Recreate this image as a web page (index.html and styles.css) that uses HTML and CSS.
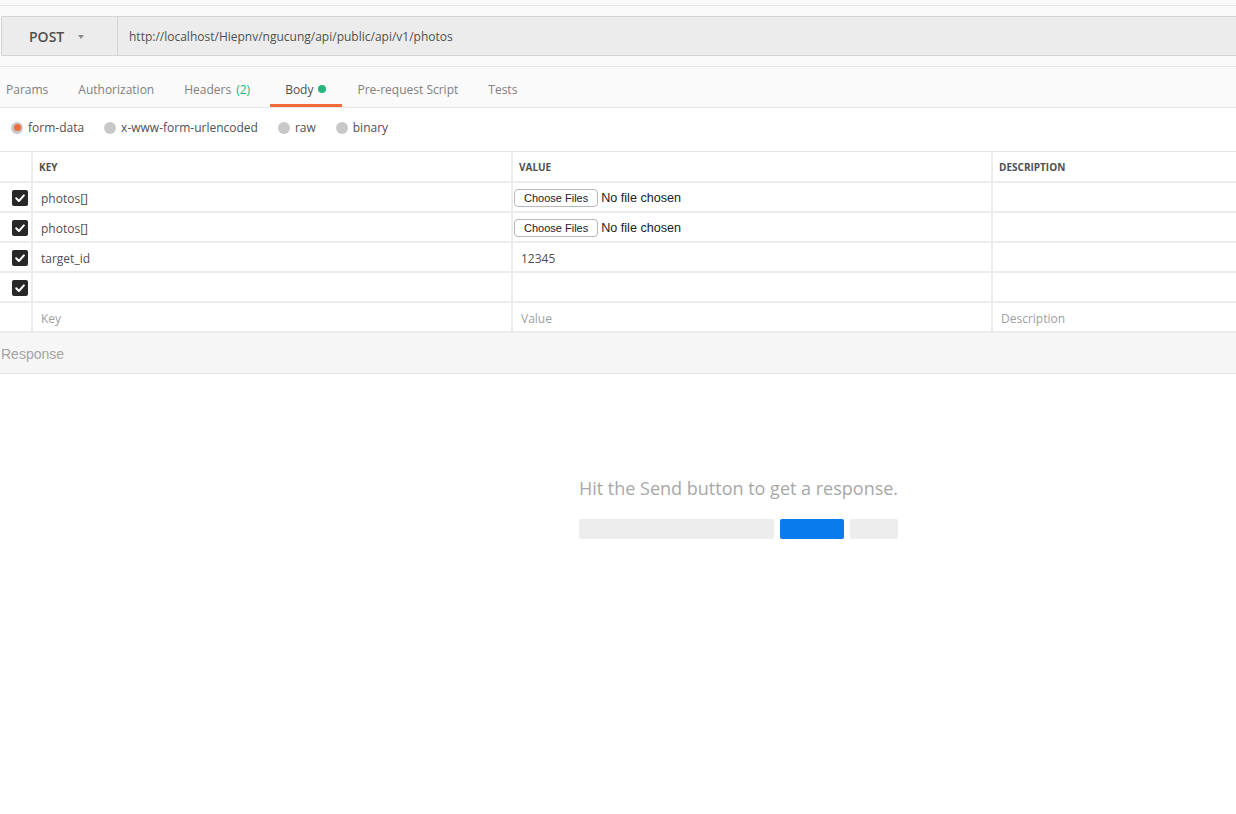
FILE: index.html
```html
<!DOCTYPE html>
<html>
<head>
<meta charset="utf-8">
<link rel="stylesheet" href="styles.css">
</head>
<body>
<div class="app">
  <div class="topstrip"></div>
  <div class="urlrow">
    <div class="urlbar">
      <div class="method">POST <span class="caret"></span></div>
      <div class="url">http://localhost/Hiepnv/ngucung/api/public/api/v1/photos</div>
    </div>
  </div>
  <div class="tabs">
    <div class="tab first">Params</div>
    <div class="tab">Authorization</div>
    <div class="tab headers">Headers <span class="count">(2)</span></div>
    <div class="tab active">Body <span class="dot"></span></div>
    <div class="tab">Pre-request Script</div>
    <div class="tab">Tests</div>
  </div>
  <div class="body">
    <div class="radios">
      <div class="radio"><span class="circle sel"></span>form-data</div>
      <div class="radio"><span class="circle"></span>x-www-form-urlencoded</div>
      <div class="radio"><span class="circle"></span>raw</div>
      <div class="radio"><span class="circle"></span>binary</div>
    </div>
    <div class="table">
      <div class="cell chk head"></div>
      <div class="cell head">KEY</div>
      <div class="cell head">VALUE</div>
      <div class="cell head last">DESCRIPTION</div>

      <div class="cell chk"><span class="cb"><svg viewBox="0 0 16 16" width="16" height="16"><path d="M4.2 8.3 L6.9 11 L11.9 5.4" fill="none" stroke="#fff" stroke-width="2" stroke-linecap="round" stroke-linejoin="round"/></svg></span></div>
      <div class="cell">photos[]</div>
      <div class="cell file"><span class="filebtn">Choose Files</span><span class="nofile">No file chosen</span></div>
      <div class="cell last"></div>

      <div class="cell chk"><span class="cb"><svg viewBox="0 0 16 16" width="16" height="16"><path d="M4.2 8.3 L6.9 11 L11.9 5.4" fill="none" stroke="#fff" stroke-width="2" stroke-linecap="round" stroke-linejoin="round"/></svg></span></div>
      <div class="cell">photos[]</div>
      <div class="cell file"><span class="filebtn">Choose Files</span><span class="nofile">No file chosen</span></div>
      <div class="cell last"></div>

      <div class="cell chk"><span class="cb"><svg viewBox="0 0 16 16" width="16" height="16"><path d="M4.2 8.3 L6.9 11 L11.9 5.4" fill="none" stroke="#fff" stroke-width="2" stroke-linecap="round" stroke-linejoin="round"/></svg></span></div>
      <div class="cell">target_id</div>
      <div class="cell">12345</div>
      <div class="cell last"></div>

      <div class="cell chk"><span class="cb"><svg viewBox="0 0 16 16" width="16" height="16"><path d="M4.2 8.3 L6.9 11 L11.9 5.4" fill="none" stroke="#fff" stroke-width="2" stroke-linecap="round" stroke-linejoin="round"/></svg></span></div>
      <div class="cell"></div>
      <div class="cell"></div>
      <div class="cell last"></div>

      <div class="cell chk"></div>
      <div class="cell ph">Key</div>
      <div class="cell ph">Value</div>
      <div class="cell ph last">Description</div>
    </div>
  </div>
  <div class="response-bar">Response</div>
  <div class="response">
    <div class="empty">
      <div class="hint">Hit the Send button to get a response.</div>
      <div class="bars">
        <span class="bar b1"></span>
        <span class="bar b2"></span>
        <span class="bar b3"></span>
      </div>
    </div>
  </div>
</div>
</body>
</html>
```
FILE: styles.css
```css
* { box-sizing: border-box; }
html, body { margin: 0; padding: 0; }
body {
  background: #fff;
  font-family: "Open Sans", "Liberation Sans", sans-serif;
  font-size: 12px;
  color: #505050;
  width: 1236px;
  height: 814px;
  overflow: hidden;
}
.app { width: 1236px; }

.topstrip {
  height: 6px;
  background: #fafafa;
  border-bottom: 1px solid #e6e6e6;
}
.urlrow {
  background: #fafafa;
  padding: 10px 0 10px 1px;
  border-bottom: 1px solid #e6e6e6;
}
.urlbar {
  display: flex;
  height: 40px;
  background: #ececec;
  border: 1px solid #d3d3d3;
  border-right: none;
  border-radius: 2px 0 0 2px;
}
.method {
  width: 116px;
  border-right: 1px solid #d3d3d3;
  display: flex;
  align-items: center;
  padding-left: 27px;
  font-size: 14px;
  font-weight: 600;
  color: #505050;
}
.caret {
  display: inline-block;
  margin-left: 14px;
  width: 0; height: 0;
  border-left: 3.5px solid transparent;
  border-right: 3.5px solid transparent;
  border-top: 4px solid #8a8a8a;
  margin-top: 1px;
}
.url {
  display: flex;
  align-items: center;
  padding-left: 11px;
  font-size: 12px;
  color: #505050;
}

.tabs {
  display: flex;
  height: 41px;
  background: #fafafa;
  border-bottom: 1px solid #e6e6e6;
}
.tab {
  padding: 7px 15px 0;
  display: flex;
  align-items: center;
  color: #808080;
  font-size: 12px;
  border-bottom: 3px solid transparent;
}
.tab.first { padding-left: 6px; }
.tab.headers { padding-right: 20px; }
.tab .count { color: #26b47f; margin-left: 5px; }
.tab.active { color: #505050; border-bottom-color: #f26b3a; padding-right: 16px; }
.tab .dot {
  display: inline-block;
  width: 8px; height: 8px;
  border-radius: 50%;
  background: #26b47f;
  margin-left: 5px;
}

.body { background: #fff; }
.radios {
  display: flex;
  align-items: center;
  height: 44px;
  padding-left: 11px;
  padding-bottom: 4px;
  gap: 20px;
  border-bottom: 1px solid #e6e6e6;
}
.radio {
  display: flex;
  align-items: center;
  color: #505050;
  font-size: 12px;
}
.circle {
  width: 12px; height: 12px;
  border-radius: 50%;
  background: #c8c8c8;
  margin-right: 5px;
  display: inline-flex;
  align-items: center;
  justify-content: center;
}
.circle.sel::after {
  content: "";
  width: 7px; height: 7px;
  border-radius: 50%;
  background: #f26b3a;
}

.table {
  display: grid;
  grid-template-columns: 33px 480px 480px 1fr;
  grid-template-rows: 31px;
  grid-auto-rows: 30px;
}
.cell {
  border-right: 2px solid #ececec;
  border-bottom: 2px solid #ececec;
  display: flex;
  align-items: center;
  padding-left: 8px;
  padding-top: 2px;
  font-size: 12px;
  color: #505050;
  white-space: nowrap;
  overflow: hidden;
}
.cell.last { border-right: none; }
.cell.head {
  font-size: 10px;
  font-weight: 700;
  padding-left: 6px;
  padding-top: 0;
  color: #505050;
}
.cell.chk { padding-left: 12px; }
.cell.ph { color: #a0a0a0; }
.cell.file { padding-left: 1px; }
.cb {
  width: 16px; height: 16px;
  border-radius: 2px;
  background: #282828;
  display: inline-block;
}
.cb svg { display: block; }
.filebtn {
  display: inline-flex;
  align-items: center;
  height: 18px;
  padding: 0 9px;
  border: 1px solid #b9b9b9;
  border-radius: 4px;
  background: #fff;
  font-family: "Liberation Sans", Arial, sans-serif;
  font-size: 11px;
  color: #222;
  margin-right: 3px;
}
.nofile {
  font-family: "Liberation Sans", Arial, sans-serif;
  font-size: 12.6px;
  color: #222;
}

.response-bar {
  height: 41px;
  background: #f6f6f6;
  border-bottom: 1px solid #e6e6e6;
  display: flex;
  align-items: center;
  padding-left: 1px;
  padding-top: 1px;
  font-family: "Liberation Sans", Arial, sans-serif;
  font-size: 14px;
  color: #a4a4a4;
}
.response {
  background: #fff;
  height: 440px;
  display: flex;
  justify-content: center;
  padding-left: 241px;
  padding-top: 102px;
}
.empty {
  display: flex;
  flex-direction: column;
  align-items: stretch;
}
.hint {
  font-size: 18px;
  color: #a8a8a8;
  line-height: 24px;
  white-space: nowrap;
}
.bars {
  display: flex;
  gap: 6px;
  margin-top: 19px;
}
.bar {
  height: 20px;
  border-radius: 2px;
  background: #ededed;
}
.b1 { width: 195px; }
.b2 { width: 64px; background: #097bed; }
.b3 { width: 48px; }
```
